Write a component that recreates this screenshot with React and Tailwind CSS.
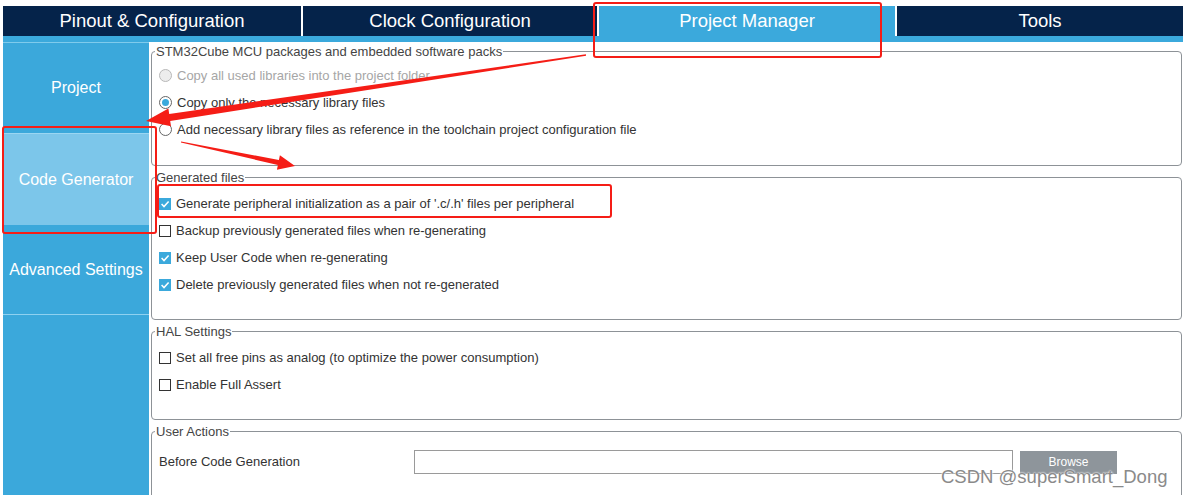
import React from "react";

const Radio = ({ checked, disabled }) => (
  <span
    className={`flex h-[13px] w-[13px] shrink-0 items-center justify-center rounded-full border ${
      disabled ? "border-[#b8b8b8] bg-[#ededed]" : "border-[#666] bg-white"
    }`}
  >
    {checked && <span className="h-[7px] w-[7px] rounded-full bg-[#3ba9dc]" />}
  </span>
);

const Check = ({ checked }) =>
  checked ? (
    <span className="flex h-[12px] w-[12px] shrink-0 items-center justify-center bg-[#3ba9dc]">
      <svg viewBox="0 0 12 12" className="h-[12px] w-[12px]">
        <path d="M2.6 6.1 L5 8.6 L9.6 3.4" fill="none" stroke="white" strokeWidth="1.5" />
      </svg>
    </span>
  ) : (
    <span className="h-[12px] w-[12px] shrink-0 border border-[#333] bg-white" />
  );

const Row = ({ radio, checked, disabled, label }) => (
  <div className="flex h-[27px] items-center gap-[5px]">
    {radio ? <Radio checked={checked} disabled={disabled} /> : <Check checked={checked} />}
    <span className={disabled ? "text-[#a6a6a6]" : "text-[#333]"}>{label}</span>
  </div>
);

const Group = ({ title, h, pt = "pt-[5px]", children }) => (
  <fieldset className={`${h} ${pt} shrink-0 rounded-[4px] border border-[#8d9297] px-[7px]`}>
    <legend className="-ml-[4px] px-[1px] leading-[15px] text-[#444]">{title}</legend>
    {children}
  </fieldset>
);

const tabs = [
  { name: "Pinout & Configuration", w: "w-[298px]" },
  { name: "Clock Configuration", w: "w-[294px]" },
  { name: "Project Manager", w: "w-[296px]", active: true },
  { name: "Tools", w: "flex-1" },
];

const Arrow = ({ points }) => <polygon points={points} fill="#f51d16" />;

export default function App() {
  return (
    <div className="relative h-[495px] w-[1183px] overflow-hidden bg-white pl-[3px] pt-[6px] font-['Liberation_Sans',Arial,sans-serif]">
      {/* top tabs */}
      <div className="flex h-[30px] gap-[2px] bg-white">
        {tabs.map((t) => (
          <div
            key={t.name}
            className={`${t.w} flex items-center justify-center text-[18.5px] text-white ${
              t.active ? "bg-[#3ba9dc]" : "bg-[#05234a]"
            }`}
          >
            {t.name}
          </div>
        ))}
      </div>
      <div className="h-[6px] bg-[#3ba9dc]" />

      <div className="flex h-[453px]">
        {/* side menu */}
        <div className="flex w-[146px] shrink-0 flex-col border-t border-[#7fcbec] bg-[#3ba8db] text-[16px] text-white">
          <div className="flex h-[90px] items-center justify-center">Project</div>
          <div className="flex h-[92px] items-center justify-center border-t border-[#9ad6f2] bg-[#7cc6ea]">
            Code Generator
          </div>
          <div className="flex h-[90px] items-center justify-center border-b border-[#8fd1f0]">
            Advanced Settings
          </div>
        </div>

        {/* content */}
        <div className="ml-[2px] mr-[1px] flex flex-1 flex-col gap-[4px] pt-[2px] text-[13px]">
          <Group title="STM32Cube MCU packages and embedded software packs" h="h-[122px]" pt="pt-[3px]">
            <Row radio disabled label="Copy all used libraries into the project folder" />
            <Row radio checked label="Copy only the necessary library files" />
            <Row radio label="Add necessary library files as reference in the toolchain project configuration file" />
          </Group>
          <Group title="Generated files" h="h-[150px]">
            <Row checked label="Generate peripheral initialization as a pair of '.c/.h' files per peripheral" />
            <Row label="Backup previously generated files when re-generating" />
            <Row checked label="Keep User Code when re-generating" />
            <Row checked label="Delete previously generated files when not re-generated" />
          </Group>
          <Group title="HAL Settings" h="h-[96px]">
            <Row label="Set all free pins as analog (to optimize the power consumption)" />
            <Row label="Enable Full Assert" />
          </Group>
          <Group title="User Actions" h="h-[120px]">
            <div className="mt-[6px] flex h-[24px] items-center">
              <span className="w-[255px] text-[#333]">Before Code Generation</span>
              <div className="h-[24px] w-[599px] border border-[#9a9a9a] bg-white" />
              <button className="ml-[7px] h-[23px] w-[97px] bg-[#8e959b] text-[12px] text-white">Browse</button>
            </div>
            <div className="mt-[21px] flex h-[24px] items-center">
              <span className="w-[255px]" />
              <div className="h-[24px] w-[599px] border border-[#9a9a9a] bg-white" />
            </div>
          </Group>
        </div>
      </div>

      {/* red annotations */}
      <div className="absolute left-[593px] top-[2px] h-[56px] w-[289px] rounded-[3px] border-2 border-[#f51d16]" />
      <div className="absolute left-[2px] top-[126px] h-[108px] w-[155px] rounded-[3px] border-2 border-[#f51d16]" />
      <div className="absolute left-[157px] top-[184px] h-[34px] w-[455px] rounded-[3px] border-2 border-[#f51d16]" />
      <svg className="pointer-events-none absolute left-0 top-0 h-[495px] w-[1183px]" viewBox="0 0 1183 495">
        <Arrow points="585.9,54.3 169.2,114 168.4,108.5 146,121 171,126.3 170.2,120.9 586.1,55.7" />
        <Arrow points="181.1,141.4 278.9,160.1 279.9,155.2 295,166 276.9,169.8 277.9,164.9 180.9,142.6" />
      </svg>

      {/* watermark */}
      <div className="absolute left-[941px] top-[463px] text-[18.5px] text-[#8a8a8a] [text-shadow:0_0_2px_#fff,0_0_2px_#fff]">
        CSDN @superSmart_Dong
      </div>
    </div>
  );
}
